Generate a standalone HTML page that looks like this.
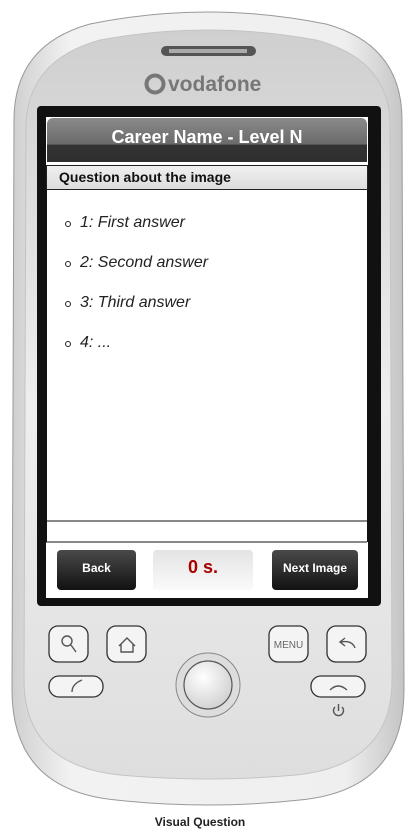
<!DOCTYPE html>
<html><head><meta charset="utf-8"><style>
*{margin:0;padding:0;box-sizing:border-box}
body{width:416px;height:837px;background:#fff;position:relative;overflow:hidden;font-family:"Liberation Sans",Arial,sans-serif}
.abs{position:absolute}
.title{left:47px;top:118px;width:320px;height:44px;border-radius:6px 6px 0 0;background:linear-gradient(#8a8a8a 0%,#6a6a6a 60%,#333 61%,#2e2e2e 100%);color:#fff;font-weight:bold;font-size:18px;text-align:center;line-height:38px}
.q{left:46px;top:165px;width:322px;height:25px;background:linear-gradient(#f0f0f0,#dcdcdc);border:1px solid #222;font-weight:bold;font-size:14px;line-height:23px;padding-left:12px;color:#111}
.li{left:80px;font-style:italic;font-size:16px;color:#222}
.b{left:65px;width:6px;height:6px;border:1.3px solid #222;border-radius:50%}
.btn{top:550px;height:40px;border-radius:4px;background:linear-gradient(#4a4a4a,#111);color:#fff;font-weight:bold;font-size:12px;text-align:center;line-height:36px}
</style></head><body>
<svg class="abs" style="left:0;top:0" width="416" height="837">
<defs>
<linearGradient id="g1" x1="0" y1="0" x2="1" y2="0"><stop offset="0" stop-color="#cfcfcf"/><stop offset=".15" stop-color="#f2f2f2"/><stop offset=".85" stop-color="#efefef"/><stop offset="1" stop-color="#c4c4c4"/></linearGradient>
<linearGradient id="g2" x1="0" y1="0" x2="0" y2="1"><stop offset="0" stop-color="#cfcfcf"/><stop offset=".5" stop-color="#eeeeee"/><stop offset="1" stop-color="#dedede"/></linearGradient>
<radialGradient id="tb" cx=".4" cy=".35" r=".7"><stop offset="0" stop-color="#fff"/><stop offset="1" stop-color="#cfcfcf"/></radialGradient>
</defs>
<path d="M14,120 Q14,45 90,24 Q208,0 326,24 Q402,45 402,120 L404,690 Q404,790 300,800 Q208,810 116,800 Q12,790 12,690 Z" fill="url(#g1)" stroke="#999" stroke-width="1"/>
<path d="M26,125 Q28,60 100,40 Q208,20 316,40 Q390,60 390,125 L392,680 Q392,765 296,775 Q208,783 120,775 Q24,765 24,680 Z" fill="url(#g2)" stroke="#c4c4c4"/>
<rect x="161" y="46" width="95" height="10" rx="5" fill="#555"/>
<rect x="169" y="49" width="78" height="4" fill="#aaa"/>
<circle cx="155" cy="84" r="8.5" fill="none" stroke="#777" stroke-width="4"/>
<text x="168" y="91" font-family="Liberation Sans" font-weight="bold" font-size="21" fill="#777">vodafone</text>
<rect x="37" y="106" width="344" height="500" rx="4" fill="#111"/>
<rect x="46" y="117" width="322" height="481" fill="#fff"/>
<line x1="46" y1="521" x2="367" y2="521" stroke="#111"/>
<line x1="46" y1="542" x2="367" y2="542" stroke="#111"/>
<line x1="46.5" y1="190" x2="46.5" y2="542" stroke="#111"/>
<line x1="367.5" y1="190" x2="367.5" y2="542" stroke="#111"/>
<g fill="#f4f4f4" stroke="#333" stroke-width="1.3">
<rect x="49" y="626" width="39" height="36" rx="9"/>
<rect x="107" y="626" width="39" height="36" rx="9"/>
<rect x="269" y="626" width="39" height="36" rx="9"/>
<rect x="327" y="626" width="39" height="36" rx="9"/>
<rect x="49" y="676" width="54" height="21" rx="10"/>
<rect x="311" y="676" width="54" height="21" rx="10"/>
</g>
<g fill="none" stroke="#555" stroke-width="1.4">
<circle cx="67" cy="641" r="5"/><line x1="71" y1="645" x2="76" y2="652"/>
<path d="M119,646 L127,638 L135,646 M121,644 V652 H133 V644"/>
<path d="M355,648 Q352,640 341,642 M345,638 L340,642 L345,646"/>
<path d="M72,692 Q72,684 82,680"/>
<path d="M330,690 Q338,682 347,690"/>
<path d="M335,707 A5,5 0 1 0 342,707 M338.5,704 V711"/>
</g>
<text x="288.5" y="648" text-anchor="middle" font-family="Liberation Sans" font-size="10" fill="#666">MENU</text>
<circle cx="208" cy="685" r="32" fill="#ddd" stroke="#888"/>
<circle cx="208" cy="685" r="24" fill="url(#tb)" stroke="#555" stroke-width="1.2"/>
</svg>
<div class="abs title">Career Name - Level N</div>
<div class="abs q">Question about the image</div>
<div class="abs b" style="top:221px"></div><div class="abs li" style="top:214px">1: First answer</div>
<div class="abs b" style="top:261px"></div><div class="abs li" style="top:254px">2: Second answer</div>
<div class="abs b" style="top:301px"></div><div class="abs li" style="top:294px">3: Third answer</div>
<div class="abs b" style="top:341px"></div><div class="abs li" style="top:334px">4: ...</div>
<div class="abs btn" style="left:57px;width:79px">Back</div>
<div class="abs" style="left:153px;top:550px;width:100px;height:40px;border-radius:4px;background:linear-gradient(#e4e4e4,#fafafa);color:#a00;font-weight:bold;font-size:18px;text-align:center;line-height:34px">0 s.</div>
<div class="abs btn" style="left:272px;width:86px">Next Image</div>
<div class="abs" style="left:0;width:400px;top:815px;text-align:center;font-weight:bold;font-size:12px;color:#222">Visual Question</div>
</body></html>
